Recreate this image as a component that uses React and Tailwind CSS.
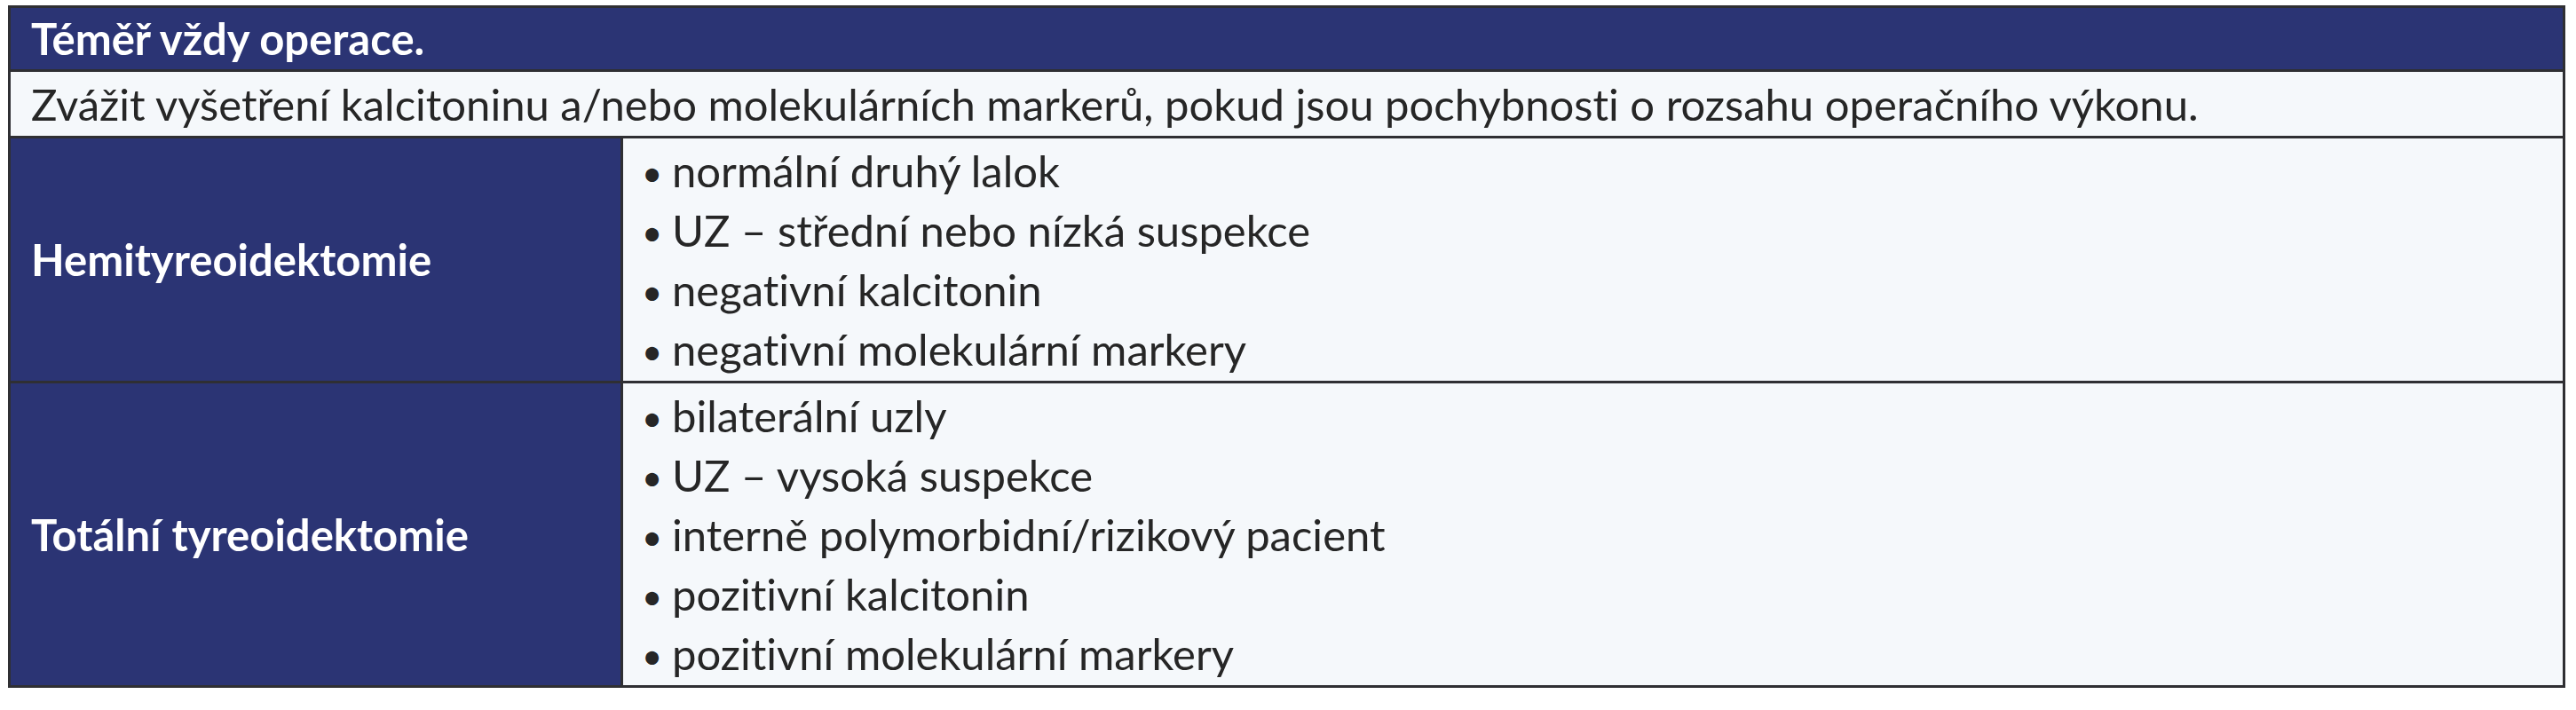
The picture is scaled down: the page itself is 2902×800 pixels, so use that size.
export default function App() {
  const font = { fontFamily: "Lato, 'Liberation Sans', sans-serif" };
  const hemi = [
    "normální druhý lalok",
    "UZ – střední nebo nízká suspekce",
    "negativní kalcitonin",
    "negativní molekulární markery",
  ];
  const total = [
    "bilaterální uzly",
    "UZ – vysoká suspekce",
    "interně polymorbidní/rizikový pacient",
    "pozitivní kalcitonin",
    "pozitivní molekulární markery",
  ];
  const Item = ({ t }) => (
    <div className="flex items-center h-[67px] text-[#262626] text-[49px] leading-[67px]">
      <span className="w-[34px] leading-none text-[40px] translate-y-[3px]">•</span>
      <span>{t}</span>
    </div>
  );
  return (
    <div
      className="w-[2902px] h-[800px] bg-white pt-[6px] pl-[9px] [font-variant-ligatures:none]"
      style={font}
    >
      <div className="w-[2881px] border-[3px] border-[#2f2f33] bg-[#f5f8fb]">
        <div className="h-[72px] bg-[#2b3474] border-b-[3px] border-[#2f2f33] flex items-center pl-[23px]">
          <span className="text-white font-bold text-[49px] leading-none">Téměř vždy operace.</span>
        </div>
        <div className="h-[75px] border-b-[3px] border-[#2f2f33] flex items-center pl-[23px]">
          <span className="text-[#262626] text-[49px] leading-none">
            Zvážit vyšetření kalcitoninu a/nebo molekulárních markerů, pokud jsou pochybnosti o rozsahu operačního výkonu.
          </span>
        </div>
        <div className="flex h-[276px] border-b-[3px] border-[#2f2f33]">
          <div className="w-[690px] bg-[#2b3474] border-r-[3px] border-[#2f2f33] flex items-center pl-[23px]">
            <span className="text-white font-bold text-[49px] leading-none">Hemityreoidektomie</span>
          </div>
          <div className="flex-1 flex flex-col justify-center pl-[21px]">
            {hemi.map((t) => (
              <Item key={t} t={t} />
            ))}
          </div>
        </div>
        <div className="flex h-[340px]">
          <div className="w-[690px] bg-[#2b3474] border-r-[3px] border-[#2f2f33] flex items-center pl-[23px]">
            <span className="text-white font-bold text-[49px] leading-none">Totální tyreoidektomie</span>
          </div>
          <div className="flex-1 flex flex-col justify-center pl-[21px]">
            {total.map((t) => (
              <Item key={t} t={t} />
            ))}
          </div>
        </div>
      </div>
    </div>
  );
}
